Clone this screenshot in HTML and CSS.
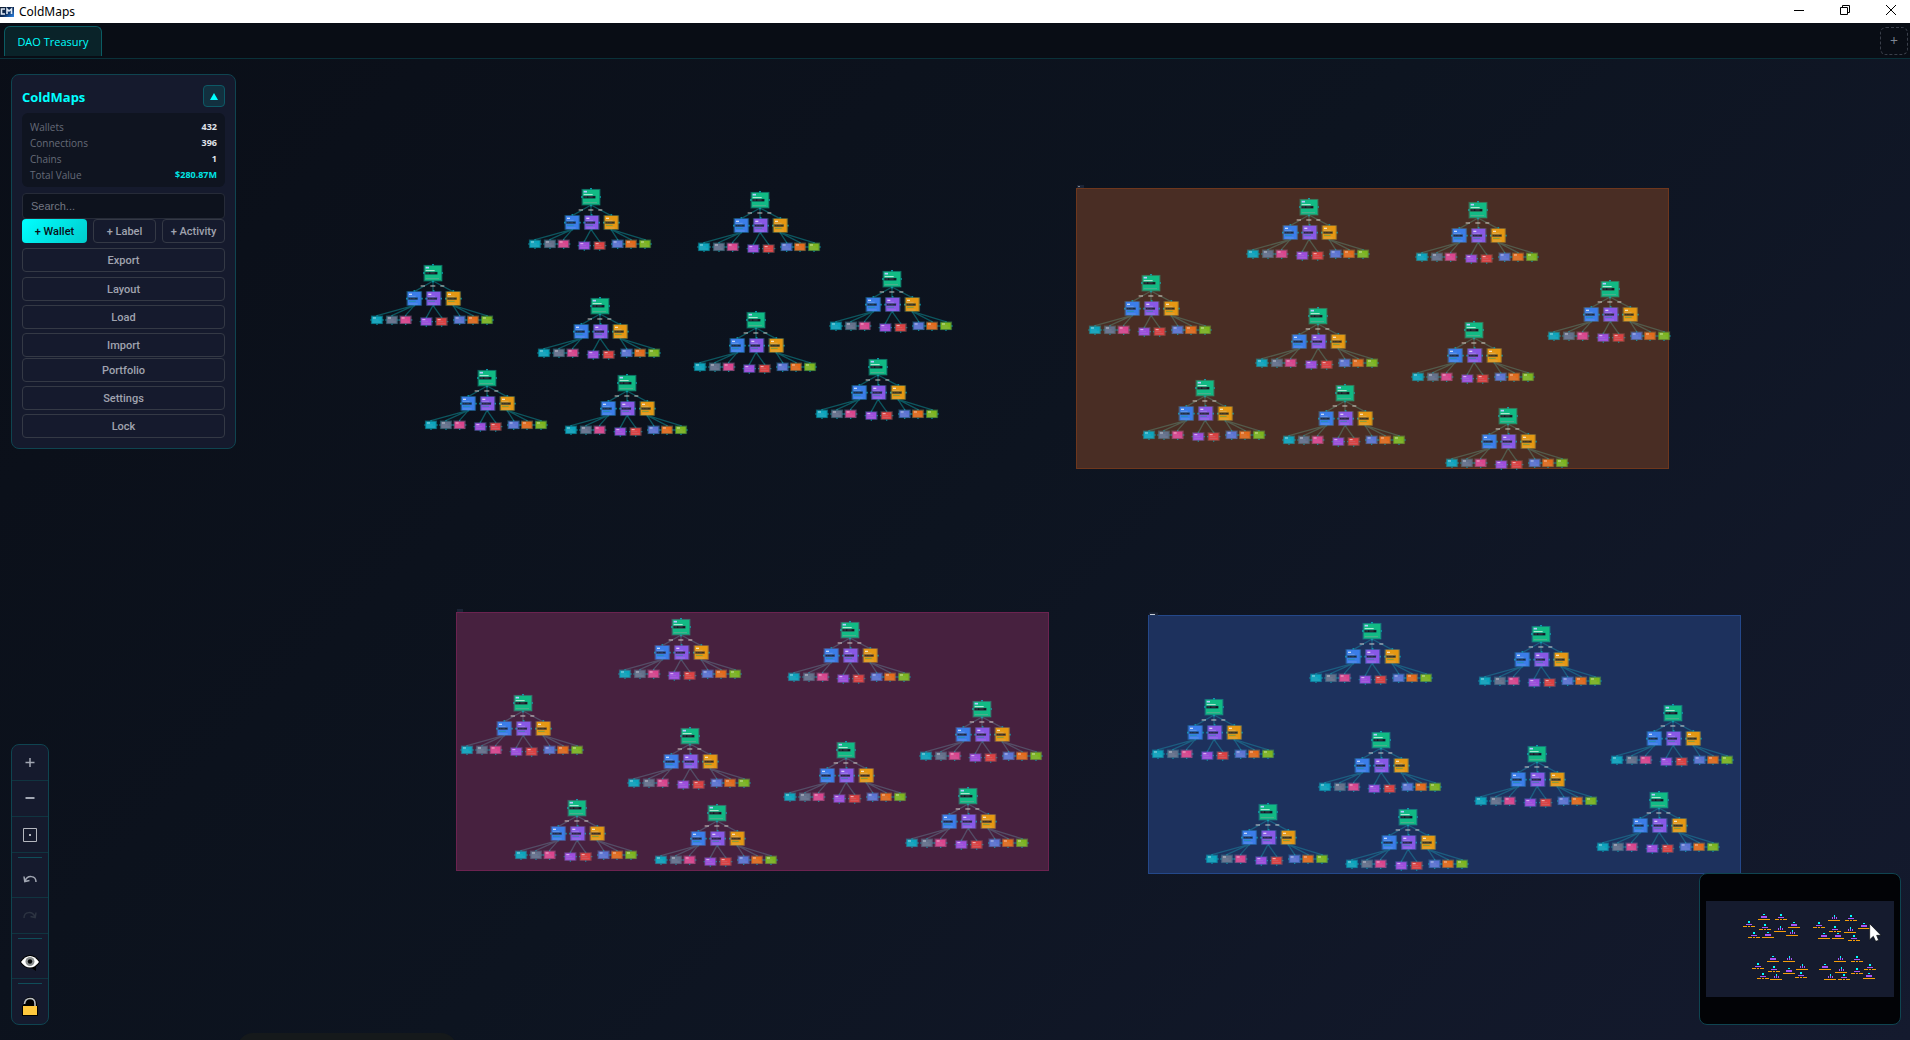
FILE: index.html
```html
<!DOCTYPE html>
<html lang="en">
<head>
<meta charset="utf-8">
<title>ColdMaps</title>
<link rel="stylesheet" href="styles.css">
</head>
<body>
<header class="titlebar">
  <svg class="app-icon" width="14" height="10" viewBox="0 0 14 10" aria-hidden="true">
    <defs><linearGradient id="ig" x1="0" y1="0" x2="1" y2="1"><stop offset="0" stop-color="#101b2c"/><stop offset=".55" stop-color="#0b2c5c"/><stop offset="1" stop-color="#2f8bf0"/></linearGradient></defs>
    <rect width="14" height="10" fill="url(#ig)"/>
    <path d="M5 2H1.500V7H5M7 7V2L9 4L11.500 2V7" fill="none" stroke="#dfe9f5" stroke-width="1.600"/>
  </svg>
  <span class="app-name">ColdMaps</span>
  <button class="win" aria-label="Minimize"><svg width="10" height="10"><path d="M0 5.500H10" stroke="#000"/></svg></button>
  <button class="win" aria-label="Restore"><svg width="10" height="10"><path d="M.5 2.500H7.500V9.500H.5ZM2.500 2.500V.5H9.500V7.500H7.500" fill="none" stroke="#000"/></svg></button>
  <button class="win win-close" aria-label="Close"><svg width="10" height="10"><path d="M0 0L10 10M10 0L0 10" stroke="#000"/></svg></button>
</header>
<nav class="tabs">
  <button class="tab">DAO Treasury</button>
  <button class="tab-add" aria-label="New tab">+</button>
</nav>
<main class="canvas">
  <svg class="graph" aria-label="Wallet map">
    <defs>
      <g id="leaf">
        <path d="M-3 12H37M17 -3V27" stroke="#08a9bb" stroke-width="4" opacity=".8"/>
        <rect x="-1" y="-1" width="36" height="25" opacity=".6"/><rect x="1" y="1" width="31" height="22"/>
        <path d="M5 6H14" stroke="#fff" stroke-width="3" opacity=".65"/>
        <path d="M5 12H22M5 18H28" stroke="#aab4c4" stroke-width="2" opacity=".35"/>
      </g>
      <g id="mid">
        <path d="M-3 22H47M22 -3V45" stroke="#08a9bb" stroke-width="5"/>
        <rect x="-1" width="46" height="43" opacity=".6"/><rect x="2" y="1" width="40" height="41"/>
        <path d="M6 9H15" stroke="#fff" stroke-width="4" opacity=".7"/>
        <path d="M6 15H26M6 38H32" stroke="#ccd5e5" stroke-width="2" opacity=".4"/>
        <rect x="4" y="19" width="28" height="6" fill="#10131b" opacity=".8"/>
        <path d="M8 22H13M16 22H24" stroke="#78808b" stroke-width="1" opacity=".7"/>
        <path d="M6 30H26" stroke="#10a779" stroke-width="3" opacity=".5"/>
      </g>
      <g id="tree"><g transform="scale(.3333)">
        <g class="link">
          <path d="M0 48L-56 80M0 48V80M0 48L60 80M-56 121L-168 152M-56 121L-124 152M-56 121L-83 152M0 121L-20 158M0 121L26 158M60 121L80 152M60 121L120 152M60 121L161 152"/>
        </g>
        <path d="M-37 63H-24M-8 63H7M22 63H34" stroke="#f0e6df" stroke-width="3" opacity=".85"/>
        <g fill="#11ba84">
          <path d="M-30 24H30M0 -3V52" stroke="#06b6c8" stroke-width="5"/>
          <rect x="-28" width="56" height="49" opacity=".6"/><rect x="-25" y="2" width="51" height="45"/>
          <path d="M-22 8H-12" stroke="#b9c7ff" stroke-width="5"/>
          <path d="M-22 17H5" stroke="#c3f2df" stroke-width="3"/>
          <rect x="-23" y="21" width="36" height="7" fill="#111820"/>
          <path d="M-20 24H-12M-8 24H5" stroke="#67747b" stroke-width="1.500"/>
          <path d="M-22 41H18" stroke="#83a798" stroke-width="3" opacity=".6"/>
        </g>
        <use href="#mid" x="-78" y="79" fill="#3b7de9"/>
        <use href="#mid" x="-20" y="79" fill="#8858e6"/>
        <use href="#mid" x="39" y="79" fill="#e59712"/>
        <use href="#leaf" x="-185" y="153" fill="#0ca4bd"/>
        <use href="#leaf" x="-140" y="153" fill="#64708a"/>
        <use href="#leaf" x="-99" y="153" fill="#da448d"/>
        <use href="#leaf" x="-37" y="158" fill="#9d4dde"/>
        <use href="#leaf" x="9" y="158" fill="#dc4142"/>
        <use href="#leaf" x="63" y="153" fill="#5b73d3"/>
        <use href="#leaf" x="103" y="153" fill="#e36a1a"/>
        <use href="#leaf" x="145" y="153" fill="#7cb51e"/>
      </g></g>
      <g id="cluster">
        <use href="#tree" x="591" y="189"/><use href="#tree" x="760" y="192"/>
        <use href="#tree" x="433" y="265"/><use href="#tree" x="600" y="298"/>
        <use href="#tree" x="756" y="312"/><use href="#tree" x="892" y="271"/>
        <use href="#tree" x="487" y="370"/><use href="#tree" x="627" y="375"/>
      </g>
    </defs>
    <g transform="translate(0 -59)">
      <rect x="1076.500" y="188.500" width="592" height="280" fill="#492d24" stroke="#6e371d"/>
      <rect x="456.500" y="612.500" width="592" height="258" fill="#47213f" stroke="#6b2350"/>
      <rect x="1148.500" y="615.500" width="592" height="258" fill="#1d315d" stroke="#24488a"/>
      <path d="M1077 186.500H1084M457 610.500H463M1149 614H1158" stroke="#1b2436" stroke-width="3"/>
      <path d="M1078 186.500H1080" stroke="#7a808c"/>
      <path d="M1150 614.500H1155" stroke="#c4cad4"/>
      <g stroke="#0d565f"><use href="#cluster"/><use href="#tree" x="878" y="359"/></g>
      <g stroke="#535a4b"><use href="#cluster" x="718" y="10"/><use href="#tree" x="1508" y="408"/></g>
      <g stroke="#544d66"><use href="#cluster" x="90" y="430"/><use href="#tree" x="968" y="788"/></g>
      <g stroke="#1c5d80"><use href="#cluster" x="781" y="434"/><use href="#tree" x="1659" y="792"/></g>
    </g>
  </svg>

  <aside class="panel">
    <div class="panel-head"><h1>ColdMaps</h1><button class="toggle" aria-label="Collapse"><svg width="8" height="7"><path d="M4 0L8 7H0Z" fill="#0ff"/></svg></button></div>
    <dl class="stats">
      <div><dt>Wallets</dt><dd>432</dd></div>
      <div><dt>Connections</dt><dd>396</dd></div>
      <div><dt>Chains</dt><dd>1</dd></div>
      <div><dt>Total Value</dt><dd class="value">$280.87M</dd></div>
    </dl>
    <input class="search" type="text" placeholder="Search..." aria-label="Search">
    <div class="add-row"><button class="btn primary">+ Wallet</button><button class="btn">+ Label</button><button class="btn">+ Activity</button></div>
    <div class="menu-top"><button class="btn">Export</button><button class="btn">Layout</button></div>
    <div class="menu"><button class="btn">Load</button><button class="btn">Import</button></div>
    <div class="menu menu-end"><button class="btn">Portfolio</button><button class="btn">Settings</button><button class="btn">Lock</button></div>
  </aside>

  <div class="tools">
    <button class="tool" aria-label="Zoom in"><svg width="20" height="20"><path d="M5.500 9.500H14.500M10 5V14" stroke="#a2a7b3" stroke-width="1.500"/></svg></button>
    <button class="tool" aria-label="Zoom out"><svg width="20" height="20"><path d="M5.500 9H14.500" stroke="#a2a7b3" stroke-width="2"/></svg></button>
    <button class="tool" aria-label="Fit view"><svg width="20" height="20"><path d="M3.500 3.500H16.500V16.500H3.500Z" fill="none" stroke="#b4b7bf"/><rect x="9" y="9" width="2" height="2" fill="#b4b7bf"/></svg></button>
    <hr>
    <button class="tool" aria-label="Undo"><svg width="20" height="20"><path d="M5 11C7.500 4.500 16 5.500 16 12M4 6.500L4.800 11.500L9.500 10.500" fill="none" stroke="#a2a7b3" stroke-width="1.500"/></svg></button>
    <button class="tool" aria-label="Redo" disabled><svg width="20" height="20"><path d="M15 11C12.500 4.500 4 5.500 4 12M16 6.500L15.200 11.500L10.500 10.500" fill="none" stroke="#2c3341" stroke-width="1.500"/></svg></button>
    <hr>
    <button class="tool" aria-label="Toggle labels"><svg width="20" height="20"><g transform="translate(0 2)"><path d="M0 9Q4 2 10 2T20 9Q18 12.500 16 13.500V18L12 15.500Q4 16 0 9Z" fill="#000"/><path d="M1 9Q5 3 10 3T19 9Q15 14.500 10 14.500T1 9Z" fill="#fff"/><circle cx="10" cy="8.500" r="4.500" fill="#8b8f8f"/><circle cx="10" cy="8.500" r="2.200" fill="#090b0c"/></g></svg></button>
    <hr>
    <button class="tool last" aria-label="Unlock"><svg width="20" height="20"><g transform="translate(0 1)"><path d="M2 9L4 7Q4 0 10 0T17 7V9H18V19H2Z" fill="#000"/><path d="M4.500 7Q5 1.500 10 1.500T15 6.500V9" fill="none" stroke="#b9bdc1" stroke-width="1.600"/><rect x="3" y="9" width="14" height="9" fill="#ffc83d"/></g></svg></button>
  </div>

  <div class="pill"></div>

  <div class="minimap">
    <svg viewBox="60 42 600 450" shape-rendering="crispEdges" aria-label="Minimap">
      <defs>
        <path id="o" d="M-18 15H-7V18H-18ZM-4 15H3V18H-4ZM6 15H18V18H6Z" fill="#f59e0b"/>
        <g id="a"><rect x="-1" width="3" height="6" fill="#0ff"/><path d="M-7 6H-4V12H-7ZM-1 6H2V12H-1ZM5 6H8V12H5Z" fill="#a855f7"/><rect x="-18" y="15" width="36" height="3" fill="#f59e0b"/></g>
        <g id="b"><rect x="-3" width="6" height="6" fill="#0ff"/><rect x="-9" y="9" width="18" height="3" fill="#a855f7"/><use href="#o"/></g>
        <g id="c"><rect x="-3" width="6" height="3" fill="#0ff"/><rect x="-9" y="6" width="18" height="6" fill="#a855f7"/><rect x="-18" y="15" width="36" height="3" fill="#f59e0b"/></g>
      </defs>
      <rect x="78" y="123" width="564" height="288" fill="#151b2e"/>
      <use href="#b" x="207" y="183"/><use href="#c" x="252" y="162"/><use href="#b" x="303" y="162"/><use href="#c" x="342" y="186"/><use href="#b" x="255" y="192"/><use href="#a" x="301" y="198"/><use href="#b" x="222" y="216"/><use href="#c" x="264" y="216"/><use href="#a" x="337" y="210"/>
      <use href="#b" x="417" y="186"/><use href="#a" x="463" y="165"/><use href="#b" x="513" y="165"/><use href="#c" x="552" y="189"/><use href="#b" x="465" y="198"/><use href="#a" x="511" y="201"/><use href="#c" x="432" y="219"/><use href="#c" x="474" y="219"/><use href="#b" x="522" y="225"/>
      <use href="#b" x="234" y="309"/><use href="#c" x="279" y="288"/><use href="#a" x="328" y="288"/><use href="#a" x="367" y="312"/><use href="#b" x="282" y="318"/><use href="#c" x="327" y="324"/><use href="#b" x="249" y="339"/><use href="#a" x="289" y="342"/><use href="#b" x="363" y="336"/>
      <use href="#c" x="435" y="312"/><use href="#a" x="481" y="288"/><use href="#b" x="531" y="288"/><use href="#b" x="570" y="312"/><use href="#a" x="484" y="321"/><use href="#b" x="531" y="324"/><use href="#a" x="451" y="342"/><use href="#b" x="492" y="342"/><use href="#c" x="567" y="339"/>
      <path d="M569 191V239L580 229L587 244L596 241L590 226H603Z" fill="#fff" stroke="#05070b" stroke-width="2" shape-rendering="auto"/>
    </svg>
  </div>
</main>
</body>
</html>
```
FILE: styles.css
```css
* { box-sizing: border-box; }

body {
  margin: 0;
  min-height: 100vh;
  display: flex;
  flex-direction: column;
  overflow: hidden;
  background: linear-gradient(135deg, #0a0e17 0%, #0d1420 50%, #141a2e 100%);
  font-family: "Open Sans", "Noto Sans", sans-serif;
  color: #e0e3ea;
}

button { font: inherit; padding: 0; margin: 0; border: 0; background: none; color: inherit; }

svg { display: block; }

.titlebar {
  display: flex;
  align-items: center;
  height: 23px;
  background: #fff;
  color: #000;
  font-family: "Noto Sans", sans-serif;
  font-size: 12px;
  line-height: 16px;
}
.app-name { margin-left: 5px; flex: 1; }
.win {
  width: 46px;
  height: 20px;
  display: flex;
  align-items: center;
  justify-content: center;
  align-self: flex-start;
}
.win-close { width: 42px; padding-left: 4px; }

.tabs {
  display: flex;
  justify-content: space-between;
  height: 36px;
  padding: 3px 2px 2px 4px;
  background: #090d15;
  border-bottom: 1px solid #0a3139;
}
.tab {
  width: 98px;
  height: 30px;
  border: 1px solid #0b5c63;
  border-bottom: 0;
  border-radius: 6px 6px 0 0;
  background: #0a2329;
  color: #0ff;
  font-size: 11px;
  font-weight: 500;
}
.tab-add {
  width: 28px;
  height: 28px;
  margin-top: 1px;
  border: 1px dashed #3a3f4a;
  border-radius: 6px;
  color: #7e8794;
  font-size: 14px;
  line-height: 16px;
}

.canvas { position: relative; flex: 1; overflow: hidden; }
.graph { position: absolute; inset: 0; width: 100%; height: 100%; }
.link { fill: none; stroke-width: 4px; }

.panel {
  position: absolute;
  left: 11px;
  top: 15px;
  width: 225px;
  padding: 10px;
  border: 1px solid #0f4450;
  border-radius: 8px;
  background: #151a2d;
}
.panel-head { display: flex; justify-content: space-between; align-items: center; }
.panel-head h1 { margin: 0; padding-top: 2px; font-size: 13px; line-height: 20px; color: #0ff; }
.toggle {
  width: 22px;
  height: 22px;
  display: flex;
  align-items: center;
  justify-content: center;
  border: 1px solid #0d5966;
  border-radius: 4px;
  background: #12303f;
}
.stats {
  margin: 6px 0;
  padding: 6px 8px 4px;
  border-radius: 6px;
  background: #0f1420;
  font-size: 10px;
  line-height: 16px;
}
.stats div { display: flex; justify-content: space-between; }
.stats dt { color: #666b78; }
.stats dd { margin: 0; font-family: "Noto Sans", sans-serif; font-size: 9px; font-weight: 700; }
.stats .value { color: #00e5e5; }

.search {
  display: block;
  width: 100%;
  height: 26px;
  padding: 0 8px;
  border: 1px solid #262b38;
  border-radius: 4px;
  background: #0d121d;
  color: #e0e3ea;
  font: 11px "Liberation Sans", sans-serif;
}
.search::placeholder { color: #727682; opacity: 1; }

.btn {
  height: 24px;
  border: 1px solid #343945;
  border-radius: 4px;
  color: #a0a3af;
  font: 500 11px Roboto, "Liberation Sans", sans-serif;
}
.add-row { display: grid; grid-template-columns: 65fr 63fr 63fr; gap: 6px; }
.primary { border: 0; background: linear-gradient(135deg, #0ff, #00cccc); color: #0a0e17; }
.menu-top { display: grid; gap: 5px; margin: 5px 0 4px; }
.menu { display: grid; gap: 4px; }
.menu-end { margin-top: 1px; }

.tools {
  position: absolute;
  left: 11px;
  bottom: 15px;
  width: 38px;
  display: flex;
  flex-direction: column;
  border: 1px solid #0f4450;
  border-radius: 8px;
  background: #151a2d;
}
.tool {
  height: 36px;
  display: flex;
  align-items: center;
  justify-content: center;
  border-bottom: 1px solid #103440;
}
.last { border-bottom: 0; }
.tools hr { width: 24px; height: 1px; margin: 4px auto; border: 0; background: #0f4d59; }

.pill {
  position: absolute;
  left: 237px;
  bottom: -25px;
  width: 220px;
  height: 32px;
  border-radius: 16px;
  background: #15191b;
}

.minimap {
  position: absolute;
  right: 9px;
  bottom: 15px;
  width: 202px;
  height: 152px;
  border: 1px solid #0f4450;
  border-radius: 8px;
  background: #020306;
}
.minimap svg { width: 100%; height: 100%; }
```
